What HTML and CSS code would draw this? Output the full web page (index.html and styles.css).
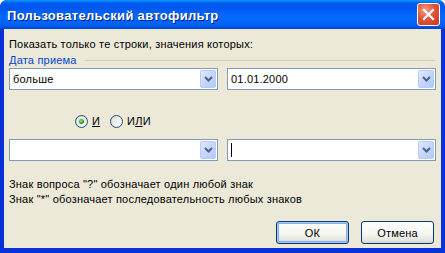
FILE: index.html
```html
<!doctype html>
<html>
<head>
  <meta charset="utf-8">
  <title>Пользовательский автофильтр</title>
  <link rel="stylesheet" href="styles.css">
</head>
<body>
  <div class="window">
    <div class="titlebar">
      <span class="title">Пользовательский автофильтр</span>
      <span class="close">
        <svg width="13" height="13" viewBox="0 0 13 13">
          <path d="M2 2 L11 11 M11 2 L2 11" stroke="#fff" stroke-width="2.2" stroke-linecap="square"/>
        </svg>
      </span>
    </div>
    <div class="content">
      <p class="line">Показать только те строки, значения которых:</p>
      <div class="group">
        <span class="group-label">Дата приема</span>
        <span class="group-rule"></span>
      </div>
      <div class="row">
        <div class="combo"><span class="value">больше</span><span class="drop"><svg width="9" height="6" viewBox="0 0 9 6"><path d="M1 1 L4.5 4.5 L8 1" fill="none" stroke="#4d6185" stroke-width="2"/></svg></span></div>
        <div class="combo"><span class="value">01.01.2000</span><span class="drop"><svg width="9" height="6" viewBox="0 0 9 6"><path d="M1 1 L4.5 4.5 L8 1" fill="none" stroke="#4d6185" stroke-width="2"/></svg></span></div>
      </div>
      <div class="radios">
        <label class="radio"><span class="dot checked"></span><span><u>И</u></span></label>
        <label class="radio"><span class="dot"></span><span>И<u>Л</u>И</span></label>
      </div>
      <div class="row row-second">
        <div class="combo"><span class="value"></span><span class="drop"><svg width="9" height="6" viewBox="0 0 9 6"><path d="M1 1 L4.5 4.5 L8 1" fill="none" stroke="#4d6185" stroke-width="2"/></svg></span></div>
        <div class="combo"><span class="value"><span class="caret"></span></span><span class="drop"><svg width="9" height="6" viewBox="0 0 9 6"><path d="M1 1 L4.5 4.5 L8 1" fill="none" stroke="#4d6185" stroke-width="2"/></svg></span></div>
      </div>
      <div class="notes">
        <p class="note">Знак вопроса "?" обозначает один любой знак</p>
        <p class="note">Знак "*" обозначает последовательность любых знаков</p>
      </div>
      <div class="buttons">
        <button class="btn btn-default">ОК</button>
        <button class="btn">Отмена</button>
      </div>
    </div>
  </div>
</body>
</html>
```

FILE: styles.css
```css
html, body {
  margin: 0;
  padding: 0;
  background: #fff;
}

.window {
  width: 445px;
  height: 253px;
  display: flex;
  flex-direction: column;
  font-family: "Liberation Sans", Arial, sans-serif;
  font-size: 11px;
  letter-spacing: 0.2px;
  color: #000;
  background: #0831d9;
  border-radius: 7px 7px 0 0;
  overflow: hidden;
}

/* title bar */
.titlebar {
  height: 29px;
  flex: none;
  display: flex;
  align-items: center;
  justify-content: space-between;
  padding: 0 5px 0 7px;
  background: linear-gradient(to bottom, #0997ff 0%, #0058f0 12%, #0058ee 30%, #006cff 60%, #005ef0 88%, #0044d6 100%);
}
.title {
  color: #fff;
  font-weight: bold;
  font-size: 13px;
  letter-spacing: 0.3px;
  text-shadow: 1px 1px 0 #0a1d7a;
  padding-top: 1px;
}
.close {
  width: 21px;
  height: 21px;
  display: flex;
  align-items: center;
  justify-content: center;
  border: 1px solid #fff;
  border-radius: 3px;
  background: radial-gradient(circle at 35% 30%, #f3a08a 0%, #e0553a 45%, #c9391f 100%);
}

/* client area */
.content {
  flex: 1;
  margin: 0 4px 5px 4px;
  padding: 9px 5px 0 5px;
  background: #ece9d8;
  display: flex;
  flex-direction: column;
}
.line {
  margin: 0;
  height: 13px;
  line-height: 13px;
}

.group {
  margin-top: 2px;
  height: 14px;
  display: flex;
  align-items: center;
  gap: 8px;
}
.group-label {
  color: #0046d5;
  line-height: 14px;
}
.group-rule {
  flex: 1;
  height: 0;
  border-top: 1px solid #d0d0bf;
  margin-right: 1px;
}

.row {
  margin-top: 1px;
  display: flex;
  gap: 9px;
}
.row-second {
  margin-top: 10px;
}
.combo {
  width: 209px;
  height: 22px;
  box-sizing: border-box;
  border: 1px solid #7f9db9;
  background: #fff;
  display: flex;
  align-items: stretch;
  padding: 1px;
}
.value {
  flex: 1;
  display: flex;
  align-items: center;
  padding-left: 2px;
}
.caret {
  width: 1px;
  height: 14px;
  background: #000;
}
.drop {
  width: 16px;
  display: flex;
  align-items: center;
  justify-content: center;
  box-sizing: border-box;
  border: 1px solid #b9caf5;
  border-radius: 2px;
  background: linear-gradient(to bottom right, #e1eafe 0%, #c5d6fc 50%, #b4c8f7 100%);
}

.radios {
  margin-top: 23px;
  height: 16px;
  display: flex;
  align-items: center;
  padding-left: 66px;
  gap: 10px;
}
.radio {
  display: flex;
  align-items: center;
  gap: 4px;
}
.dot {
  width: 13px;
  height: 13px;
  box-sizing: border-box;
  border: 1px solid #1c5180;
  border-radius: 50%;
  background: radial-gradient(circle at 70% 70%, #fff 0%, #f0f0ea 40%, #d6d3c8 100%);
  display: flex;
  align-items: center;
  justify-content: center;
}
.dot.checked::after {
  content: "";
  width: 5px;
  height: 5px;
  border-radius: 50%;
  background: radial-gradient(circle at 40% 40%, #8fe08f 0%, #21a121 60%, #1a7e1a 100%);
}

.notes {
  margin-top: 16px;
}
.note {
  margin: 0;
  line-height: 15px;
}

.buttons {
  margin-top: 14px;
  display: flex;
  justify-content: flex-end;
  gap: 12px;
  padding-right: 2px;
}
.btn {
  width: 73px;
  height: 23px;
  box-sizing: border-box;
  border: 1px solid #003c74;
  border-radius: 3px;
  background: linear-gradient(to bottom, #fff 0%, #f4f4f0 60%, #e3e2da 90%, #d6d0c5 100%);
  font-family: "Liberation Sans", Arial, sans-serif;
  font-size: 11px;
  letter-spacing: 0.2px;
  color: #000;
  padding: 0;
}
.btn-default {
  box-shadow: inset 0 0 0 1px #aac4f0, inset 0 0 0 2px #89adf0;
}
```
